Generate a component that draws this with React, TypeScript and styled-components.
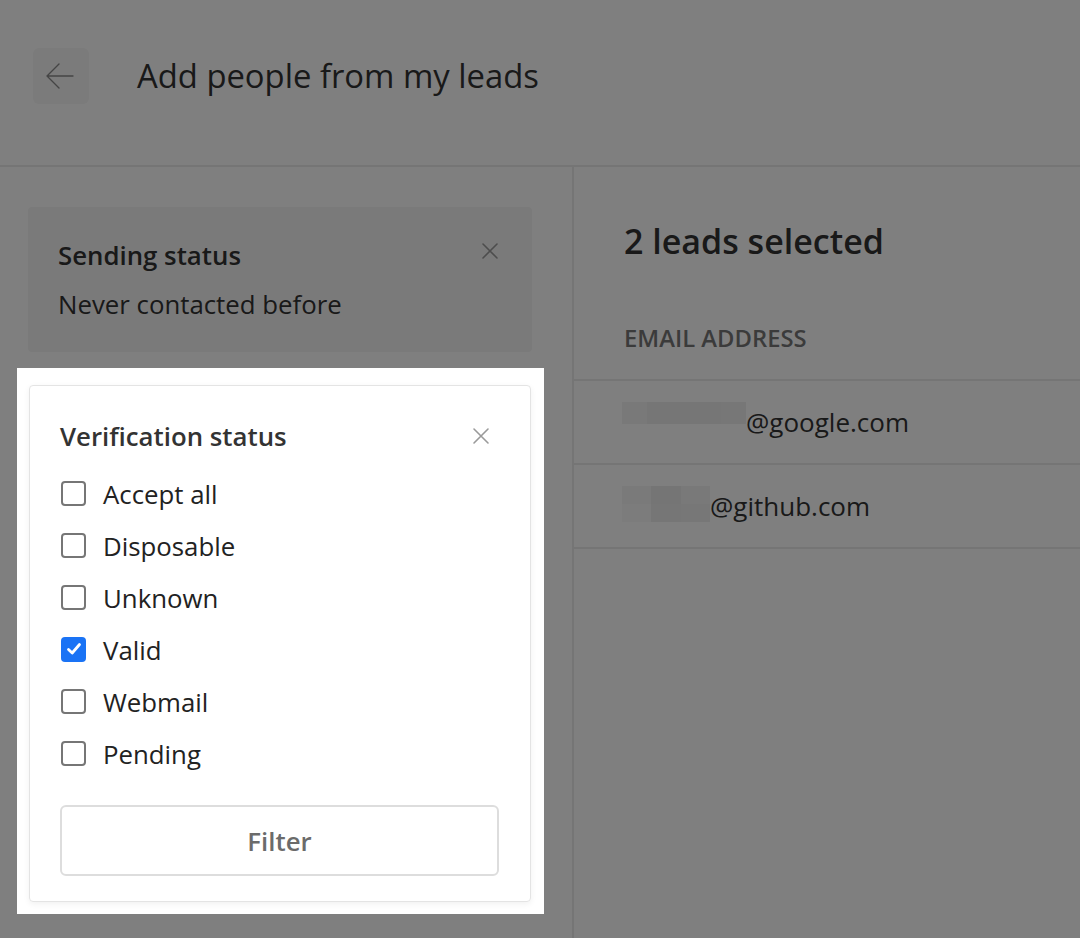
import styled, { createGlobalStyle } from 'styled-components'

const GlobalStyle = createGlobalStyle`
  html, body {
    margin: 0;
    padding: 0;
    background: #ffffff;
    font-family: 'Open Sans', 'Noto Sans', 'Liberation Sans', sans-serif;
    color: #333333;
  }
  * { box-sizing: border-box; }
`

const options = [
  { label: 'Accept all', checked: false },
  { label: 'Disposable', checked: false },
  { label: 'Unknown', checked: false },
  { label: 'Valid', checked: true },
  { label: 'Webmail', checked: false },
  { label: 'Pending', checked: false },
]

const leads = [
  {
    domain: '@google.com',
    width: 124,
    rows: [['#f2f2f2', '#ececec', '#ececec', '#ededed', '#efefef']],
    rowHeight: 22,
  },
  {
    domain: '@github.com',
    width: 88,
    rows: [
      ['#f4f4f4', '#ebebeb', '#f2f2f2'],
      ['#f8f8f8', '#ededed', '#efefef'],
    ],
    rowHeight: 18,
  },
]

function CloseIcon({ size = 18 }: { size?: number }) {
  return (
    <svg width={size} height={size} viewBox="0 0 18 18" fill="none">
      <path d="M2 2L16 16M16 2L2 16" stroke="currentColor" strokeWidth="1.6" strokeLinecap="round" />
    </svg>
  )
}

function App() {
  return (
    <>
      <GlobalStyle />
      <Page>
        <Header>
          <BackButton aria-label="Back">
            <svg width="30" height="30" viewBox="0 0 30 30" fill="none">
              <path
                d="M28 15H2M14 3L2 15L14 27"
                stroke="currentColor"
                strokeWidth="1.4"
                strokeLinecap="round"
                strokeLinejoin="round"
              />
            </svg>
          </BackButton>
          <Title>Add people from my leads</Title>
        </Header>
        <Body>
          <Sidebar>
            <FilterSummary>
              <SummaryHead>
                <FilterTitle>Sending status</FilterTitle>
                <CloseButton $top={-4} $right={3}>
                  <CloseIcon size={18} />
                </CloseButton>
              </SummaryHead>
              <SummaryValue>Never contacted before</SummaryValue>
            </FilterSummary>
            <Spotlight>
              <FilterCard>
                <CardHead>
                  <FilterTitle>Verification status</FilterTitle>
                  <CloseButton $top={0} $right={9}>
                    <CloseIcon size={18} />
                  </CloseButton>
                </CardHead>
                <OptionList>
                  {options.map((o) => (
                    <Option key={o.label}>
                      <Box $checked={o.checked}>
                        {o.checked && (
                          <svg width="18" height="18" viewBox="0 0 18 18" fill="none">
                            <path
                              d="M3.5 9.5L7.2 13L14.5 4.5"
                              stroke="#ffffff"
                              strokeWidth="2.8"
                              strokeLinecap="round"
                              strokeLinejoin="round"
                            />
                          </svg>
                        )}
                      </Box>
                      <OptionLabel>{o.label}</OptionLabel>
                    </Option>
                  ))}
                </OptionList>
                <FilterButton>Filter</FilterButton>
              </FilterCard>
            </Spotlight>
          </Sidebar>
          <Main>
            <SelectedTitle>2 leads selected</SelectedTitle>
            <ColumnHead>Email address</ColumnHead>
            {leads.map((l) => (
              <LeadRow key={l.domain}>
                <Redacted $width={l.width}>
                  {l.rows.map((r, i) => (
                    <RedactRow key={i} $height={l.rowHeight}>
                      {r.map((c, j) => (
                        <RedactCell key={j} $shade={c} />
                      ))}
                    </RedactRow>
                  ))}
                </Redacted>
                <Domain>{l.domain}</Domain>
              </LeadRow>
            ))}
          </Main>
        </Body>
        <Dim />
      </Page>
    </>
  )
}

const Page = styled.div`
  position: relative;
  width: 1080px;
  height: 938px;
  overflow: hidden;
  background: #ffffff;
`

const Dim = styled.div`
  position: absolute;
  inset: 0;
  background: rgba(0, 0, 0, 0.5);
  z-index: 5;
`

const Header = styled.header`
  height: 167px;
  display: flex;
  align-items: center;
  padding: 0 0 14px 33px;
  border-bottom: 2px solid #ebebeb;
`

const BackButton = styled.button`
  width: 56px;
  height: 56px;
  border: none;
  border-radius: 6px;
  background: #f7f7f7;
  color: #8a8a8a;
  display: flex;
  align-items: center;
  justify-content: center;
  padding: 0 3px 0 0;
  margin-right: 48px;
`

const Title = styled.h1`
  margin: 0;
  font-size: 32.8px;
  line-height: 40px;
  font-weight: 500;
  color: #333333;
`

const Body = styled.div`
  display: flex;
  height: 771px;
`

const Sidebar = styled.aside`
  width: 574px;
  flex-shrink: 0;
  border-right: 2px solid #ebebeb;
  padding: 40px 40px 0 28px;
`

const FilterSummary = styled.section`
  width: 504px;
  background: #f5f5f5;
  border-radius: 4px;
  padding: 32px 30px 32px 30px;
`

const SummaryHead = styled.div`
  display: flex;
  justify-content: space-between;
  align-items: center;
`

const FilterTitle = styled.h3`
  margin: 0;
  font-size: 25.8px;
  line-height: 32px;
  font-weight: 600;
  color: #333333;
`

const CloseButton = styled.span<{ $top: number; $right: number }>`
  display: flex;
  color: #9a9a9a;
  margin-right: ${({ $right }) => $right}px;
  position: relative;
  top: ${({ $top }) => $top}px;
`

const SummaryValue = styled.p`
  margin: 17px 0 0;
  font-size: 25.8px;
  line-height: 32px;
  color: #333333;
`

const Spotlight = styled.div`
  position: relative;
  z-index: 10;
  background: #ffffff;
  margin: 16px -12px 0 -11px;
  padding: 17px 13px 12px 12px;
`

const FilterCard = styled.section`
  border: 1px solid #e4e4e4;
  border-radius: 4px;
  box-shadow: 0 2px 6px rgba(0, 0, 0, 0.06);
  padding: 34px 31px 25px 30px;
`

const CardHead = styled.div`
  display: flex;
  justify-content: space-between;
  align-items: center;
`

const OptionList = styled.ul`
  list-style: none;
  margin: 25px 0 0;
  padding: 0;
  display: flex;
  flex-direction: column;
  gap: 20px;
`

const Option = styled.li`
  display: flex;
  align-items: center;
  height: 32px;
  line-height: 32px;
`

const Box = styled.span<{ $checked: boolean }>`
  width: 25px;
  height: 25px;
  margin-left: 1px;
  border-radius: 4px;
  display: flex;
  align-items: center;
  justify-content: center;
  border: ${({ $checked }) => ($checked ? 'none' : '2px solid #767676')};
  background: ${({ $checked }) => ($checked ? '#1a73f5' : '#ffffff')};
`

const OptionLabel = styled.span`
  margin-left: 17px;
  font-size: 25.8px;
  color: #222222;
  position: relative;
  top: 1px;
`

const FilterButton = styled.button`
  display: block;
  width: 100%;
  height: 71px;
  margin-top: 36px;
  border: 2px solid #dddddd;
  border-radius: 6px;
  background: #ffffff;
  font-family: inherit;
  font-size: 25.8px;
  font-weight: 600;
  color: #6b6b6b;
`

const Main = styled.main`
  flex: 1;
  padding-top: 52px;
`

const SelectedTitle = styled.h2`
  margin: 0 0 0 50px;
  font-size: 34px;
  line-height: 44px;
  font-weight: 600;
  color: #333333;
`

const ColumnHead = styled.div`
  margin-top: 60px;
  padding: 0 0 26px 50px;
  border-bottom: 2px solid #ebebeb;
  font-size: 23.8px;
  line-height: 30px;
  font-weight: 600;
  text-transform: uppercase;
  color: #777777;
`

const LeadRow = styled.div`
  display: flex;
  align-items: center;
  height: 84px;
  padding-left: 48px;
  border-bottom: 2px solid #ebebeb;
`

const Redacted = styled.div<{ $width: number }>`
  width: ${({ $width }) => $width}px;
  display: flex;
  flex-direction: column;
  align-self: flex-start;
  margin-top: 21px;
`

const RedactRow = styled.div<{ $height: number }>`
  display: flex;
  height: ${({ $height }) => $height}px;
`

const RedactCell = styled.span<{ $shade: string }>`
  flex: 1;
  background: ${({ $shade }) => $shade};
`

const Domain = styled.span`
  font-size: 26px;
  line-height: 32px;
  color: #333333;
`

export default App
